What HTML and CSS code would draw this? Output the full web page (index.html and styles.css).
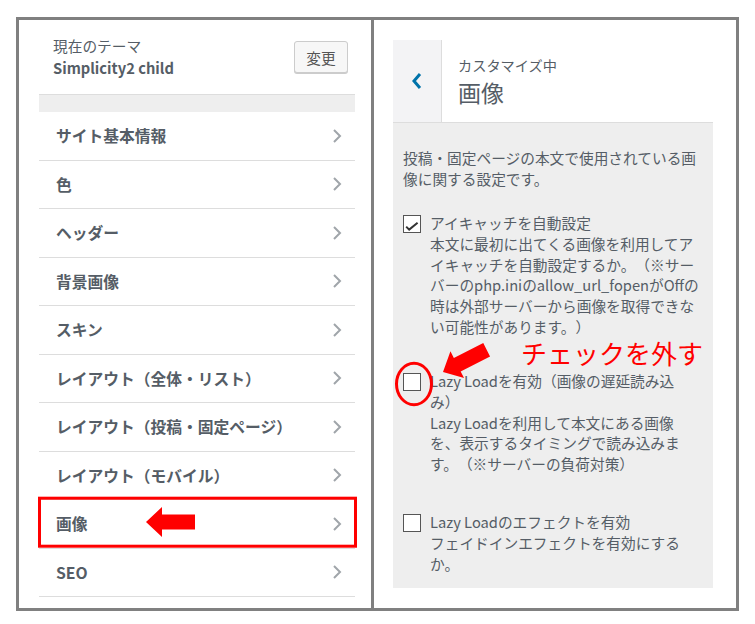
FILE: index.html
```html
<!DOCTYPE html>
<html lang="ja">
<head>
  <meta charset="UTF-8">
  <meta name="viewport" content="width=device-width, initial-scale=1.0">
  <title>画像 - カスタマイズ</title>
  <link rel="stylesheet" href="styles.css">
</head>
<body>
  <div class="page">
    <div class="frame">
      <div class="pane pane-left">
        <div class="theme">
          <div class="theme-info">
            <div class="theme-label">現在のテーマ</div>
            <div class="theme-name">Simplicity2 child</div>
          </div>
          <button class="change-btn">変更</button>
        </div>
        <div class="spacer"></div>
        <ul class="sections">
          <li class="section">サイト基本情報<svg class="chev" width="10" height="14" viewBox="0 0 10 14"><polyline points="2,1 8,7 2,13"/></svg></li>
          <li class="section">色<svg class="chev" width="10" height="14" viewBox="0 0 10 14"><polyline points="2,1 8,7 2,13"/></svg></li>
          <li class="section">ヘッダー<svg class="chev" width="10" height="14" viewBox="0 0 10 14"><polyline points="2,1 8,7 2,13"/></svg></li>
          <li class="section">背景画像<svg class="chev" width="10" height="14" viewBox="0 0 10 14"><polyline points="2,1 8,7 2,13"/></svg></li>
          <li class="section">スキン<svg class="chev" width="10" height="14" viewBox="0 0 10 14"><polyline points="2,1 8,7 2,13"/></svg></li>
          <li class="section">レイアウト（全体・リスト）<svg class="chev" width="10" height="14" viewBox="0 0 10 14"><polyline points="2,1 8,7 2,13"/></svg></li>
          <li class="section">レイアウト（投稿・固定ページ）<svg class="chev" width="10" height="14" viewBox="0 0 10 14"><polyline points="2,1 8,7 2,13"/></svg></li>
          <li class="section">レイアウト（モバイル）<svg class="chev" width="10" height="14" viewBox="0 0 10 14"><polyline points="2,1 8,7 2,13"/></svg></li>
          <li class="section">画像<svg class="chev" width="10" height="14" viewBox="0 0 10 14"><polyline points="2,1 8,7 2,13"/></svg></li>
          <li class="section">SEO<svg class="chev" width="10" height="14" viewBox="0 0 10 14"><polyline points="2,1 8,7 2,13"/></svg></li>
        </ul>
      </div>

      <div class="pane pane-right">
        <div class="panel-head">
          <button class="back-btn"><svg width="12" height="18" viewBox="0 0 12 18"><polyline points="9,2 3,9 9,16"/></svg></button>
          <div class="panel-title">
            <span class="panel-sub">カスタマイズ中</span>
            <span class="panel-name">画像</span>
          </div>
        </div>
        <div class="panel-body">
          <p class="panel-desc">投稿・固定ページの本文で使用されている画<br>像に関する設定です。</p>
          <ul class="controls">
            <li class="control">
              <span class="box"><svg width="16" height="16" viewBox="0 0 16 16"><polyline points="2.2,10.6 5.2,13.6 13.6,6.8"/></svg></span>
              <span class="control-text">アイキャッチを自動設定<br>本文に最初に出てくる画像を利用してア<br>イキャッチを自動設定するか。（※サー<br>バーのphp.iniのallow_url_fopenがOffの<br>時は外部サーバーから画像を取得できな<br>い可能性があります。）</span>
            </li>
            <li class="control">
              <span class="box"></span>
              <span class="control-text">Lazy Loadを有効（画像の遅延読み込<br>み）<br>Lazy Loadを利用して本文にある画像<br>を、表示するタイミングで読み込みま<br>す。（※サーバーの負荷対策）</span>
            </li>
            <li class="control control-last">
              <span class="box"></span>
              <span class="control-text">Lazy Loadのエフェクトを有効<br>フェイドインエフェクトを有効にする<br>か。</span>
            </li>
          </ul>
        </div>
      </div>
    </div>

    <!-- red annotations drawn over the screenshot -->
    <svg class="marks" width="755" height="624" viewBox="0 0 755 624">
      <rect x="39.5" y="498.2" width="316" height="48"/>
      <polygon class="fill" points="146,522 162,507 162,514.5 195,514.5 195,529.5 162,529.5 162,537"/>
      <ellipse cx="414" cy="384" rx="17.5" ry="20.7"/>
      <polygon class="fill" points="0,0 16,-15 16,-7.5 49,-7.5 49,7.5 16,7.5 16,15" transform="translate(443 372) rotate(-27)"/>
    </svg>
    <div class="note">チェックを外す</div>
  </div>
</body>
</html>
```

FILE: styles.css
```css
body {
  margin: 0;
  background: #fff;
  font-family: "Noto Sans CJK JP", sans-serif;
  color: #555d66;
  text-spacing-trim: space-all;
}
ul {
  list-style: none;
  margin: 0;
  padding: 0;
}
button {
  font-family: inherit;
}
.page {
  position: relative;
  width: 755px;
  height: 624px;
  overflow: hidden;
}
.frame {
  margin: 17px 0 0 16px;
  width: 723px;
  height: 594px;
  border: 3px solid #808080;
  box-sizing: border-box;
  display: flex;
}
.pane-left {
  width: 355px;
  flex: none;
  border-right: 3px solid #808080;
  box-sizing: border-box;
  padding: 0 16px 0 20px;
}
.pane-right {
  flex: 1;
  padding: 20px 23px 0 19px;
}

/* left: theme + section list */
.theme {
  display: flex;
  justify-content: space-between;
  align-items: center;
  padding: 15px 7px 15px 14px;
}
.theme-label {
  font-size: 14.7px;
  line-height: 22px;
}
.theme-name {
  font-size: 14.7px;
  line-height: 22px;
  font-weight: 600;
}
.change-btn {
  width: 54px;
  height: 32px;
  padding: 0;
  font-size: 14.7px;
  color: #555;
  background: #f7f7f7;
  border: 1px solid #ccc;
  border-radius: 3px;
  box-shadow: 0 1px 0 #ccc;
}
.spacer {
  height: 18px;
  box-sizing: border-box;
  border-top: 1px solid #ddd;
  background: #eee;
}
.section {
  height: 48.5px;
  box-sizing: border-box;
  border-bottom: 1px solid #ddd;
  display: flex;
  justify-content: space-between;
  align-items: center;
  padding: 0 13px 0 17px;
  font-size: 15.75px;
  font-weight: bold;
  color: #555d66;
}
.chev polyline {
  fill: none;
  stroke: #a0a5aa;
  stroke-width: 2;
}

/* right: panel */
.panel-head {
  height: 83px;
  box-sizing: border-box;
  border-bottom: 1px solid #ddd;
  display: flex;
  background: #fff;
}
.back-btn {
  width: 49px;
  flex: none;
  padding: 0;
  border: none;
  border-right: 1px solid #ddd;
  background: #f3f3f5;
  display: flex;
  align-items: center;
  justify-content: center;
}
.back-btn polyline {
  fill: none;
  stroke: #0073aa;
  stroke-width: 3;
}
.panel-title {
  display: flex;
  flex-direction: column;
  padding: 15px 0 0 16px;
}
.panel-sub {
  font-size: 14.2px;
  line-height: 20px;
}
.panel-name {
  font-size: 23px;
  line-height: 34px;
}
.panel-body {
  background: #eee;
  padding: 25px 10px 14px 10px;
}
.panel-desc {
  margin: 0 0 23.4px;
  font-size: 14.7px;
  line-height: 20.8px;
}
.control {
  display: flex;
  gap: 9px;
  font-size: 14.7px;
  line-height: 20.8px;
}
.control + .control {
  margin-top: 33.2px;
}
.control.control-last {
  margin-top: 37px;
}
.box {
  width: 18px;
  height: 18px;
  flex: none;
  margin-top: 2.5px;
  box-sizing: border-box;
  border: 1px solid #555;
  background: #fff;
}
.box svg {
  display: block;
}
.box polyline {
  fill: none;
  stroke: #333;
  stroke-width: 2;
}
.control-text {
  white-space: nowrap;
}

/* annotations */
.marks {
  position: absolute;
  top: 0;
  left: 0;
  pointer-events: none;
}
.marks rect,
.marks ellipse {
  fill: none;
  stroke: #f00;
  stroke-width: 3;
}
.marks .fill {
  fill: #f00;
}
.note {
  position: absolute;
  left: 521px;
  top: 340px;
  font-size: 26px;
  line-height: 26px;
  color: #f00;
}
```
